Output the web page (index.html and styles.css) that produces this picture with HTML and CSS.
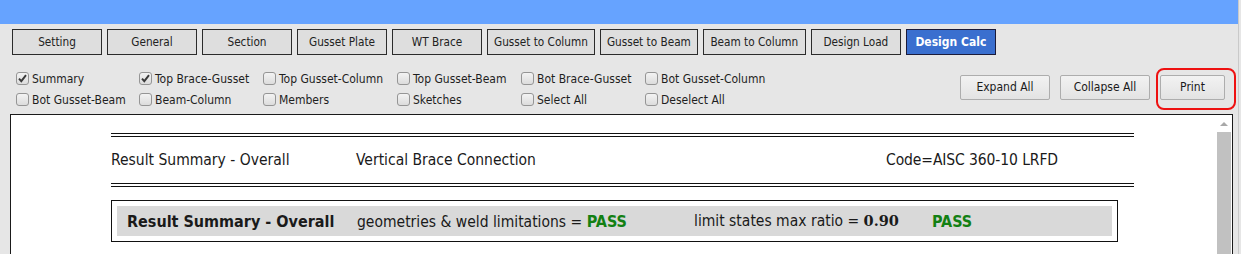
FILE: index.html
```html
<!DOCTYPE html>
<html>
<head>
<meta charset="utf-8">
<link rel="stylesheet" href="styles.css">
</head>
<body>
<div class="page">
  <div class="topbar"></div>
  <div class="tabs">
    <div class="tab">Setting</div>
    <div class="tab">General</div>
    <div class="tab">Section</div>
    <div class="tab">Gusset Plate</div>
    <div class="tab">WT Brace</div>
    <div class="tab">Gusset to Column</div>
    <div class="tab">Gusset to Beam</div>
    <div class="tab wide-tab">Beam to Column</div>
    <div class="tab">Design Load</div>
    <div class="tab active">Design Calc</div>
  </div>
  <div class="options">
    <div class="checks">
      <label class="chk"><span class="box"><svg viewBox="0 0 11 11" width="11" height="11"><path d="M2 5.6 L4.3 8.2 L9 2.2" fill="none" stroke="#3a3a3a" stroke-width="1.9"/></svg></span>Summary</label>
      <label class="chk"><span class="box"><svg viewBox="0 0 11 11" width="11" height="11"><path d="M2 5.6 L4.3 8.2 L9 2.2" fill="none" stroke="#3a3a3a" stroke-width="1.9"/></svg></span>Top Brace-Gusset</label>
      <label class="chk"><span class="box"></span>Top Gusset-Column</label>
      <label class="chk"><span class="box"></span>Top Gusset-Beam</label>
      <label class="chk"><span class="box"></span>Bot Brace-Gusset</label>
      <label class="chk"><span class="box"></span>Bot Gusset-Column</label>
      <label class="chk"><span class="box"></span>Bot Gusset-Beam</label>
      <label class="chk"><span class="box"></span>Beam-Column</label>
      <label class="chk"><span class="box"></span>Members</label>
      <label class="chk"><span class="box"></span>Sketches</label>
      <label class="chk"><span class="box"></span>Select All</label>
      <label class="chk"><span class="box"></span>Deselect All</label>
    </div>
    <div class="actions">
      <div class="btn wide">Expand All</div>
      <div class="btn wide">Collapse All</div>
      <div class="btn print">Print<span class="ring"></span></div>
    </div>
  </div>
  <div class="content">
    <div class="report">
      <div class="dline"></div>
      <div class="head">
        <div>Result Summary - Overall</div>
        <div>Vertical Brace Connection</div>
        <div class="code">Code=AISC 360-10 LRFD</div>
      </div>
      <div class="dline"></div>
      <div class="summary">
        <div class="summary-in">
          <div class="title">Result Summary - Overall</div>
          <div>geometries &amp; weld limitations = <span class="pass">PASS</span></div>
          <div>limit states max ratio = <span class="num">0.90</span></div>
          <div><span class="pass">PASS</span></div>
        </div>
      </div>
    </div>
    <div class="vscroll">
      <div class="arrow"></div>
      <div class="thumb"></div>
    </div>
  </div>
</div>
</body>
</html>
```

FILE: styles.css
```css
html, body {
  margin: 0;
  padding: 0;
  background: #e6e6e6;
  height: 254px;
  overflow: hidden;
}
body {
  font-family: "DejaVu Sans Condensed", "DejaVu Sans", sans-serif;
  font-stretch: condensed;
  color: #1a1a1a;
}
.page {
  width: 1238px;
  border-right: 1px solid #c9c9c9;
  height: 254px;
}
.topbar {
  height: 24px;
  background: #66a3ff;
}
.tabs {
  display: flex;
  gap: 5px;
  padding-left: 12px;
  margin-top: 5px;
}
.tab {
  box-sizing: border-box;
  min-width: 90px;
  height: 26px;
  padding: 0 6px;
  border: 1px solid #2b2b2b;
  background: #dedede;
  font-size: 11.7px;
  line-height: 24px;
  text-align: center;
  color: #222;
  white-space: nowrap;
}
.tab.wide-tab {
  min-width: 103px;
}
.tab.active {
  background: #3a6fcf;
  color: #fff;
  font-weight: bold;
  font-size: 12px;
  border-color: #1b1b3a;
}
.options {
  display: flex;
  height: 59px;
}
.checks {
  display: grid;
  grid-template-columns: 123px 124px 134px 124px 124px 130px;
  grid-auto-rows: 21px;
  padding-left: 16px;
  padding-top: 13px;
}
.chk {
  display: flex;
  align-items: center;
  font-size: 12px;
  color: #1e1e1e;
  white-space: nowrap;
}
.box {
  box-sizing: border-box;
  width: 13px;
  height: 13px;
  margin-right: 3px;
  border: 1px solid #959595;
  border-radius: 3px;
  background: linear-gradient(#f3f3f3, #dcdcdc);
  display: flex;
  align-items: center;
  justify-content: center;
  margin-top: -1px;
}
.actions {
  display: flex;
  gap: 10px;
  margin-left: auto;
  margin-right: 13px;
  padding-top: 20px;
}
.btn {
  box-sizing: border-box;
  height: 25px;
  border: 1px solid #adadad;
  border-radius: 2px;
  background: linear-gradient(#f2f2f2, #e3e3e3);
  font-size: 12px;
  line-height: 23px;
  text-align: center;
  color: #1a1a1a;
}
.btn.wide { width: 90px; }
.btn.print { width: 65px; position: relative; }
.ring {
  position: absolute;
  left: -5px;
  top: -8px;
  width: 80px;
  height: 42px;
  box-sizing: border-box;
  border: 2.5px solid #ee1111;
  border-radius: 8px;
}
.content {
  box-sizing: border-box;
  width: 1223px;
  height: 200px;
  margin-left: 10px;
  border: 1px solid #1a1a1a;
  background: #fff;
  display: flex;
  overflow: hidden;
}
.report {
  flex: 1;
  padding-left: 100px;
  padding-top: 18px;
}
.dline {
  width: 1023px;
  height: 2px;
  border-top: 1px solid #111;
  border-bottom: 1px solid #111;
}
.head {
  width: 1023px;
  height: 46px;
  display: grid;
  grid-template-columns: 245px 530px auto;
  align-items: center;
  font-size: 15.5px;
}
.code {
  letter-spacing: -0.1px;
}
.summary {
  box-sizing: border-box;
  width: 1007px;
  margin-top: 13px;
  border: 1px solid #111;
  padding: 5px;
}
.summary-in {
  height: 30px;
  background: #d9d9d9;
  display: grid;
  grid-template-columns: 230px 337px 238px auto;
  align-items: center;
  padding-left: 10px;
  font-size: 15.5px;
}
.title {
  font-weight: bold;
  font-size: 16px;
}
.pass {
  color: #138013;
  font-weight: bold;
  font-size: 16px;
}
.num {
  font-family: "DejaVu Serif", serif;
  font-stretch: normal;
  font-weight: bold;
  font-size: 14.5px;
}
.vscroll {
  width: 17px;
  display: flex;
  flex-direction: column;
  align-items: center;
}
.arrow {
  width: 0;
  height: 0;
  margin-top: 7px;
  border-left: 4px solid transparent;
  border-right: 4px solid transparent;
  border-bottom: 4px solid #a8a8a8;
}
.thumb {
  margin-top: 6px;
  width: 14px;
  flex: 1;
  background: #c1c1c1;
}
```
